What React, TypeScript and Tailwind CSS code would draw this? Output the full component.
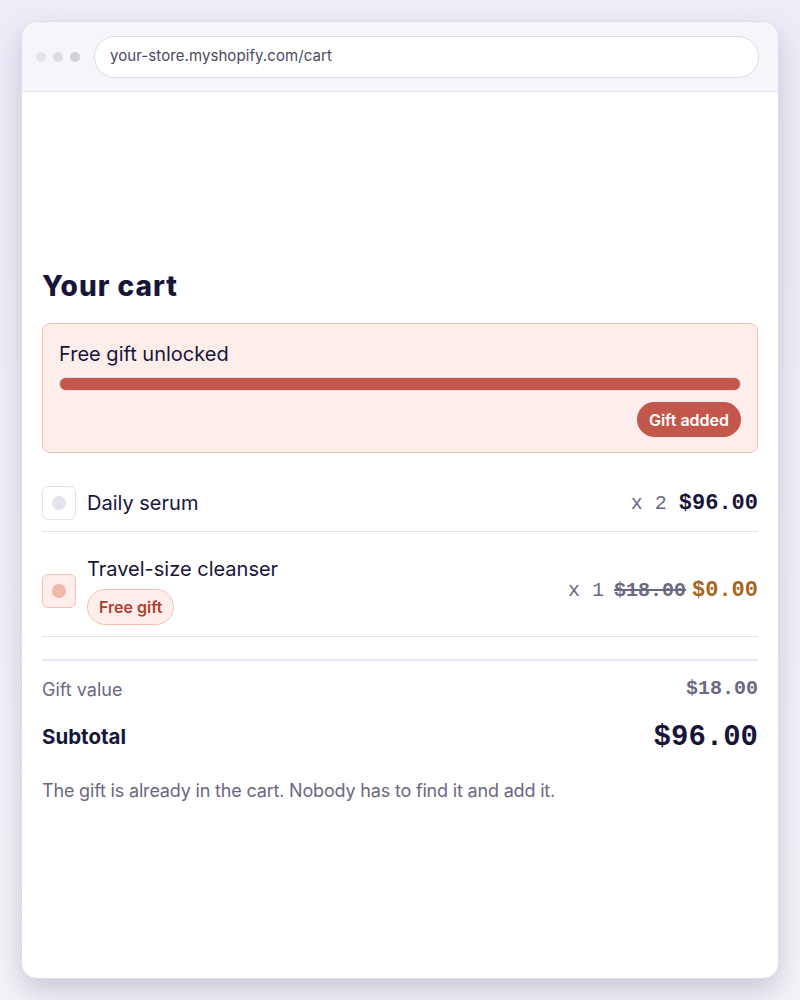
import React from "react";

const sans = { fontFamily: "Inter, 'Noto Sans', sans-serif" };
const mono = { fontFamily: "'Liberation Mono', 'DejaVu Sans Mono', monospace" };

export default function App() {
  return (
    <div
      className="w-[800px] h-[1000px] bg-gradient-to-b from-[#eeedf7] to-[#f4f4f8] pt-[21px] px-[21px]"
      style={sans}
    >
      <div className="w-[758px] h-[958px] bg-white rounded-[16px] border border-[#dedce9] overflow-hidden shadow-[0_12px_28px_rgba(50,45,100,0.22)] flex flex-col">
        <div className="h-[70px] bg-[#f6f5fa] border-b border-[#e3e1ee] flex items-center pl-[14px] pr-[19px] gap-[14px] shrink-0">
          <div className="flex gap-[7px]">
            <div className="w-[10px] h-[10px] rounded-full bg-[#e4e3ec]" />
            <div className="w-[10px] h-[10px] rounded-full bg-[#dddce6]" />
            <div className="w-[10px] h-[10px] rounded-full bg-[#d2d1dc]" />
          </div>
          <div className="flex-1 h-[42px] bg-white rounded-full border border-[#dcdaea] flex items-center pl-[15px] text-[15px] tracking-[0.005em] text-[#4b4962]">
            your-store.myshopify.com/cart
          </div>
        </div>

        <div className="px-[20px] pt-[177px]">
          <h1 className="text-[28px] leading-[34px] font-extrabold text-[#17153a] tracking-[0.035em]">
            Your cart
          </h1>

          <div className="mt-[20px] h-[130px] rounded-[8px] border border-[#f6c1b4] bg-[#fdeeec] px-[16px] pt-[17px]">
            <div className="text-[20px] leading-[26px] text-[#17153a]">Free gift unlocked</div>
            <div className="mt-[10px] h-[14px] rounded-full bg-[#c4574b] border border-[#e2d9e4]" />
            <div className="flex justify-end mt-[11px]">
              <div className="h-[35px] px-[12px] rounded-full bg-[#c4574b] text-white text-[16px] font-semibold flex items-center">
                Gift added
              </div>
            </div>
          </div>

          <div className="mt-[33px] flex items-center h-[34px]">
            <div className="w-[34px] h-[34px] rounded-[6px] border border-[#e2e1ed] bg-white flex items-center justify-center">
              <div className="w-[14px] h-[14px] rounded-full bg-[#e4e3ee]" />
            </div>
            <div className="ml-[11px] text-[20px] text-[#17153a]">Daily serum</div>
            <div className="ml-auto flex items-baseline" style={mono}>
              <span className="text-[20px] text-[#6b6883]">x 2</span>
              <span className="ml-[12px] text-[22px] font-bold text-[#17153a]">$96.00</span>
            </div>
          </div>
          <div className="mt-[11px] h-px bg-[#e3e1ee]" />

          <div className="flex items-center pt-[24px] pb-[11px]">
            <div className="w-[34px] h-[34px] rounded-[6px] border border-[#f6c1b4] bg-[#fdeeec] flex items-center justify-center">
              <div className="w-[14px] h-[14px] rounded-full bg-[#f2b8aa]" />
            </div>
            <div className="ml-[11px] flex flex-col items-start">
              <div className="text-[20px] leading-[26px] text-[#17153a]">Travel-size cleanser</div>
              <div className="mt-[7px] h-[36px] px-[11px] rounded-full border border-[#f6c1b4] bg-[#fdeeec] text-[16px] font-semibold text-[#b1402f] flex items-center">
                Free gift
              </div>
            </div>
            <div className="ml-auto flex items-baseline" style={mono}>
              <span className="text-[20px] text-[#6b6883]">x 1</span>
              <span className="ml-[10px] text-[20px] font-bold text-[#6b6883] line-through">$18.00</span>
              <span className="ml-[6px] text-[22px] font-bold text-[#a8661b]">$0.00</span>
            </div>
          </div>
          <div className="h-px bg-[#e3e1ee]" />

          <div className="mt-[22px] h-[2px] bg-[#e8e6f3]" />

          <div className="mt-[13px] flex items-center justify-between">
            <span className="text-[18px] text-[#6b6883]">Gift value</span>
            <span className="text-[20px] font-bold text-[#6b6883]" style={mono}>$18.00</span>
          </div>
          <div className="mt-[12px] flex items-center justify-between">
            <span className="text-[20.5px] font-bold text-[#17153a]">Subtotal</span>
            <span className="text-[29px] font-bold text-[#17153a]" style={mono}>$96.00</span>
          </div>

          <p className="mt-[17px] text-[18px] tracking-[-0.01em] text-[#6b6883]">
            The gift is already in the cart. Nobody has to find it and add it.
          </p>
        </div>
      </div>
    </div>
  );
}
